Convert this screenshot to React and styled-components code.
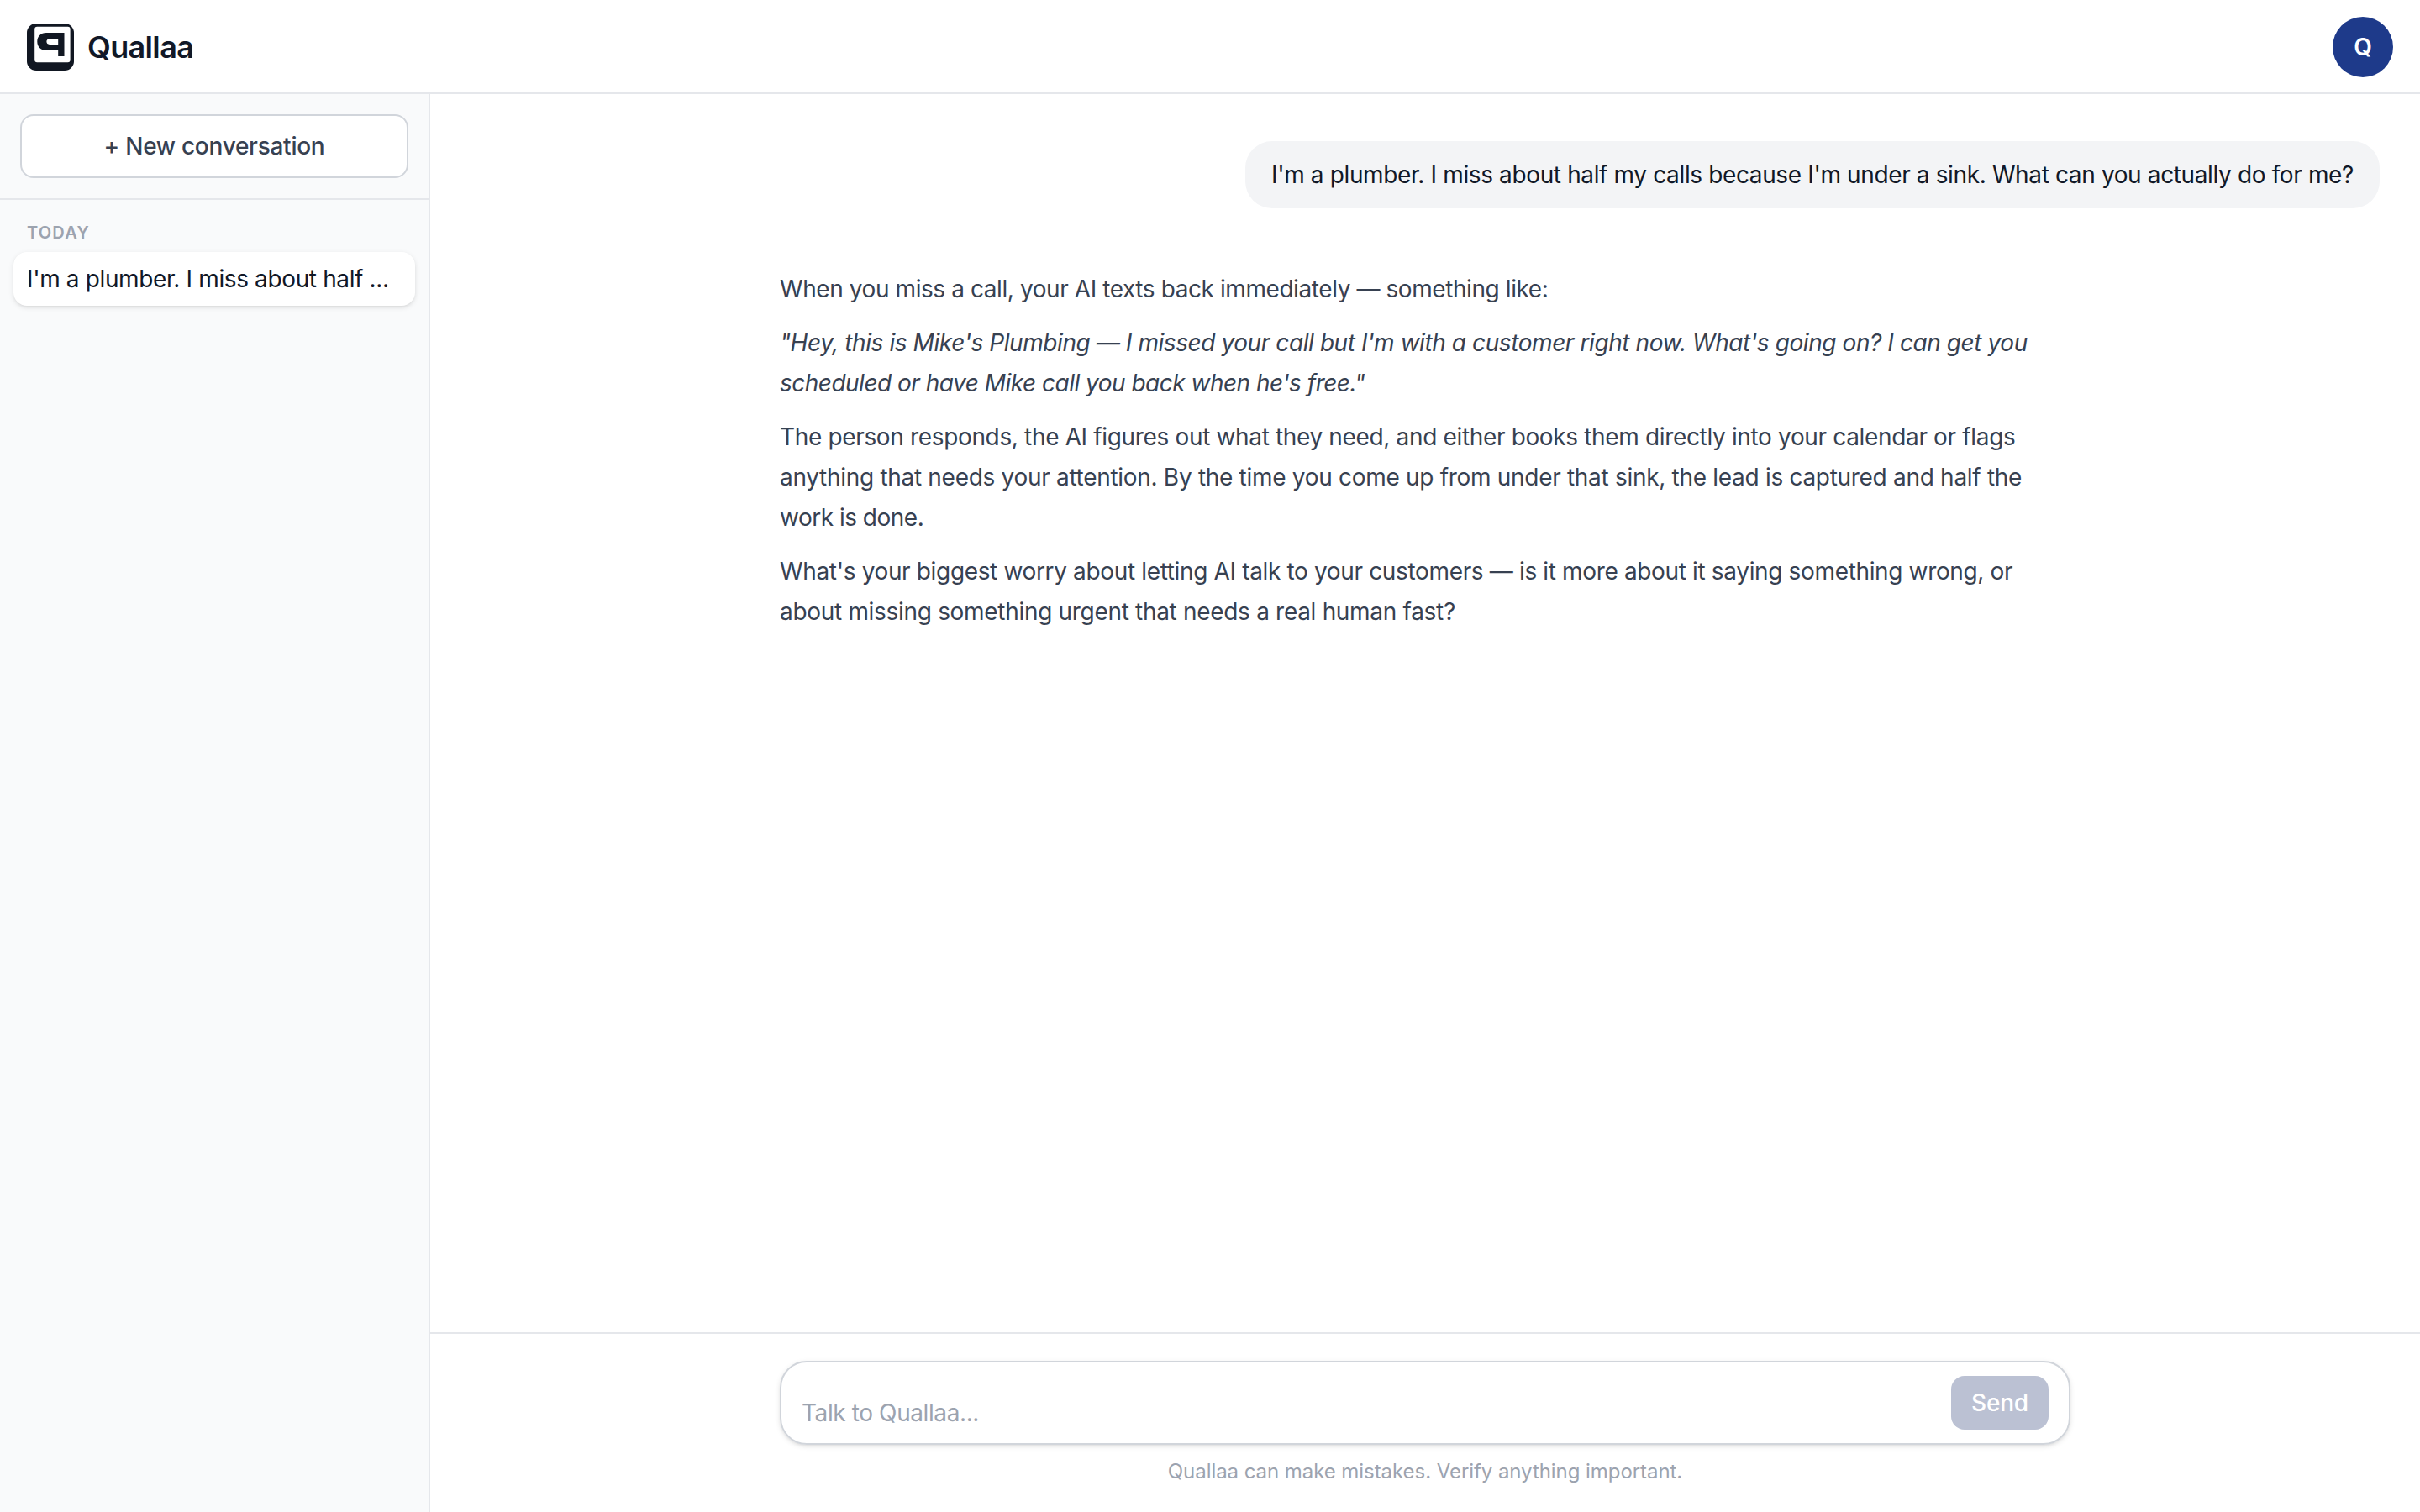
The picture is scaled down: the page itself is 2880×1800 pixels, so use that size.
import React, { useState } from "react";
import styled, { createGlobalStyle } from "styled-components";

const reply = [
  {
    lines: [
      { track: -0.42, text: "When you miss a call, your AI texts back immediately — something like:" },
    ],
  },
  {
    italic: true,
    lines: [
      { track: -0.42, text: "\"Hey, this is Mike's Plumbing — I missed your call but I'm with a customer right now. What's going on? I can get you" },
      { track: -0.51, text: "scheduled or have Mike call you back when he's free.\"" },
    ],
  },
  {
    lines: [
      { track: -0.345, text: "The person responds, the AI figures out what they need, and either books them directly into your calendar or flags" },
      { track: -0.3, text: "anything that needs your attention. By the time you come up from under that sink, the lead is captured and half the" },
      { track: -0.5, text: "work is done." },
    ],
  },
  {
    lines: [
      { track: -0.35, text: "What's your biggest worry about letting AI talk to your customers — is it more about it saying something wrong, or" },
      { track: -0.31, text: "about missing something urgent that needs a real human fast?" },
    ],
  },
];

const Logo = () => (
  <svg width="56" height="56" viewBox="0 0 56 56">
    <rect width="56" height="56" rx="11" fill="#111722" />
    <rect x="9.2" y="3.8" width="42.4" height="42.4" rx="3" fill="#fff" />
    <path
      fillRule="evenodd"
      fill="#111722"
      d="M44.5 11V39H37.2V32H23C16.5 32 12.3 27.5 12.3 21.5S16.5 11 23 11ZM37.2 18.2H27C24.6 18.2 23.4 19.8 23.4 21.6S24.6 25 27 25H37.2Z"
    />
  </svg>
);

const App = () => {
  const [draft, setDraft] = useState("");
  return (
    <Page>
      <GlobalStyle />
      <Header>
        <Brand>
          <Logo />
          <BrandName>Quallaa</BrandName>
        </Brand>
        <Avatar>Q</Avatar>
      </Header>
      <Body>
        {/* Sidebar */}
        <Sidebar>
          <SidebarTop>
            <NewButton>+ New conversation</NewButton>
          </SidebarTop>
          <History>
            <GroupLabel>TODAY</GroupLabel>
            <HistoryItem>I'm a plumber. I miss about half ...</HistoryItem>
          </History>
        </Sidebar>
        {/* Conversation */}
        <Main>
          <Messages>
            <UserBubble>
              I'm a plumber. I miss about half my calls because I'm under a sink. What can you actually do for me?
            </UserBubble>
            <Reply>
              {reply.map((p, i) => (
                <Paragraph key={i} $italic={p.italic}>
                  {p.lines.map((line) => (
                    <Line key={line.text} $track={line.track}>
                      {line.text}
                    </Line>
                  ))}
                </Paragraph>
              ))}
            </Reply>
          </Messages>
          <Composer>
            <InputBox>
              <Input
                placeholder="Talk to Quallaa..."
                value={draft}
                onChange={(e) => setDraft(e.target.value)}
              />
              <SendButton>Send</SendButton>
            </InputBox>
            <Disclaimer>Quallaa can make mistakes. Verify anything important.</Disclaimer>
          </Composer>
        </Main>
      </Body>
    </Page>
  );
};

const GlobalStyle = createGlobalStyle`
  * {
    box-sizing: border-box;
  }
  body {
    margin: 0;
    background: #fff;
    font-family: Inter, "Liberation Sans", sans-serif;
    font-size: 28px;
  }
  button, input {
    font: inherit;
  }
`;

const Page = styled.div`
  height: 100vh;
  display: flex;
  flex-direction: column;
`;

const Header = styled.header`
  height: 112px;
  flex-shrink: 0;
  padding: 2px 32px 0;
  border-bottom: 2px solid #e5e7eb;
  display: flex;
  align-items: center;
  justify-content: space-between;
`;

const Brand = styled.div`
  display: flex;
  align-items: center;
  gap: 16px;

  svg {
    display: block;
  }
`;

const BrandName = styled.span`
  font-size: 36px;
  font-weight: 600;
  line-height: 54px;
  letter-spacing: -0.65px;
  color: #111827;
`;

const Avatar = styled.div`
  width: 72px;
  height: 72px;
  border-radius: 50%;
  background: #1e3a8a;
  color: #fff;
  font-weight: 600;
  display: flex;
  align-items: center;
  justify-content: center;
`;

const Body = styled.div`
  flex: 1;
  min-height: 0;
  display: flex;
`;

const Sidebar = styled.aside`
  width: 512px;
  flex-shrink: 0;
  background: #f9fafb;
  border-right: 2px solid #e5e7eb;
`;

const SidebarTop = styled.div`
  padding: 24px;
  border-bottom: 2px solid #e5e7eb;
`;

const NewButton = styled.button`
  width: 100%;
  height: 76px;
  border: 2px solid #d1d5db;
  border-radius: 16px;
  background: #fff;
  color: #374151;
  font-weight: 500;
  letter-spacing: -0.27px;
  cursor: pointer;
`;

const History = styled.div`
  padding: 24px 16px;
`;

const GroupLabel = styled.div`
  padding: 0 16px;
  height: 38px;
  font-size: 20px;
  font-weight: 600;
  line-height: 31px;
  letter-spacing: 1.2px;
  color: #9ca3af;
`;

const HistoryItem = styled.div`
  height: 64px;
  padding: 0 16px;
  border-radius: 16px;
  background: #fff;
  color: #111827;
  line-height: 64px;
  letter-spacing: -0.37px;
  white-space: nowrap;
  box-shadow: 0 2px 6px rgba(0, 0, 0, 0.1), 0 2px 4px -2px rgba(0, 0, 0, 0.1);
`;

const Main = styled.main`
  flex: 1;
  display: flex;
  flex-direction: column;
`;

const Messages = styled.div`
  flex: 1;
  padding: 56px 48px;
  display: flex;
  flex-direction: column;
  gap: 72px;
`;

const UserBubble = styled.div`
  align-self: flex-end;
  width: 1350px;
  padding: 16px 31px;
  border-radius: 32px;
  background: #f3f4f6;
  color: #111827;
  line-height: 48px;
  letter-spacing: -0.37px;
  white-space: nowrap;
`;

const Reply = styled.div`
  width: 1536px;
  align-self: center;
  display: flex;
  flex-direction: column;
  gap: 16px;
  color: #374151;
  line-height: 48px;
`;

const Paragraph = styled.p`
  margin: 0;
  font-style: ${(props) => (props.$italic ? "italic" : "normal")};
`;

const Line = styled.span`
  display: block;
  white-space: nowrap;
  letter-spacing: ${(props) => props.$track || 0}px;
`;

const Composer = styled.div`
  height: 214px;
  padding-top: 32px;
  border-top: 2px solid #e5e7eb;
  display: flex;
  flex-direction: column;
  align-items: center;
`;

const InputBox = styled.div`
  width: 1536px;
  height: 100px;
  padding: 16px 24px;
  border: 2px solid #d1d5db;
  border-radius: 32px;
  display: flex;
  align-items: flex-end;
  box-shadow: 0 2px 6px rgba(0, 0, 0, 0.1), 0 2px 4px -2px rgba(0, 0, 0, 0.1);
`;

const Input = styled.input`
  flex: 1;
  height: 40px;
  padding: 0;
  border: none;
  outline: none;
  background: transparent;
  color: #111827;
  letter-spacing: -0.4px;

  &::placeholder {
    color: #9ca3af;
    opacity: 1;
  }
`;

const SendButton = styled.button`
  width: 116px;
  height: 64px;
  align-self: flex-start;
  padding: 0;
  border: none;
  border-radius: 16px;
  background: #bbc1d3;
  color: #fff;
  font-weight: 500;
  letter-spacing: -0.2px;
`;

const Disclaimer = styled.p`
  margin: 16px 0 0;
  font-size: 24px;
  line-height: 32px;
  letter-spacing: -0.06px;
  color: #9ca3af;
`;

export default App;
